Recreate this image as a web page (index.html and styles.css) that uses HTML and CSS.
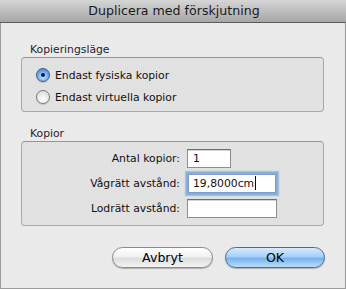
FILE: index.html
```html
<!DOCTYPE html>
<html lang="sv">
<head>
<meta charset="utf-8">
<link rel="stylesheet" href="styles.css">
</head>
<body>
<div class="window">
  <div class="titlebar">Duplicera med förskjutning</div>
  <div class="content">
    <div class="group-label first">Kopieringsläge</div>
    <div class="group radios">
      <label class="radio-row"><span class="radio checked"></span>Endast fysiska kopior</label>
      <label class="radio-row"><span class="radio"></span>Endast virtuella kopior</label>
    </div>
    <div class="group-label second">Kopior</div>
    <div class="group fields">
      <span class="field-label">Antal kopior:</span>
      <span class="input small">1</span>
      <span class="field-label">Vågrätt avstånd:</span>
      <span class="input wide focused">19,8000cm<span class="caret"></span></span>
      <span class="field-label">Lodrätt avstånd:</span>
      <span class="input wide"></span>
    </div>
    <div class="buttons">
      <button class="btn cancel">Avbryt</button>
      <button class="btn ok">OK</button>
    </div>
  </div>
</div>
</body>
</html>
```

FILE: styles.css
```css
html, body {
  margin: 0;
  padding: 0;
}
body {
  font-family: "DejaVu Sans", "Liberation Sans", sans-serif;
  font-size: 10.8px;
  color: #111;
}
.window {
  width: 346px;
  height: 289px;
  box-sizing: border-box;
  border: 1px solid #9c9c9c;
  border-top: none;
  background: repeating-linear-gradient(90deg, #ececec 0 1px, #e9e9e9 1px 2px);
  display: flex;
  flex-direction: column;
}
.titlebar {
  height: 22px;
  line-height: 22px;
  text-align: center;
  font-size: 12.6px;
  color: #1a1a1a;
  background: linear-gradient(#d6d6d6, #b9b9b9 60%, #a6a6a6);
  border-bottom: 1px solid #5c5c5c;
  margin: 0 -1px;
  padding-left: 2px;
}
.content {
  padding: 0 20px 0 20px;
  display: flex;
  flex-direction: column;
}
.group-label {
  height: 14px;
  line-height: 14px;
  padding-left: 9px;
  color: #2a2230;
}
.group-label.first { margin-top: 20px; }
.group-label.second { margin-top: 15px; }
.group {
  width: 303px;
  box-sizing: border-box;
  border: 1px solid #a9a9a9;
  border-top-color: #959595;
  border-radius: 4px;
  background: repeating-linear-gradient(90deg, #e3e3e3 0 1px, #e0e0e0 1px 2px);
}
.radios {
  height: 55px;
  padding: 6px 0 0 14px;
}
.radio-row {
  display: flex;
  align-items: center;
  height: 22px;
  gap: 5px;
}
.radio {
  width: 14px;
  height: 14px;
  border-radius: 50%;
  box-sizing: border-box;
  border: 1px solid #7a7a7a;
  background: radial-gradient(circle at 50% 70%, #ffffff, #e2e2e2 70%, #c8c8c8);
  box-shadow: 0 1px 1px rgba(0,0,0,0.15);
  position: relative;
}
.radio.checked {
  border-color: #3d5d8c;
  background: radial-gradient(circle at 50% 65%, #c9e6ff, #6fa8e8 55%, #3c76c6);
}
.radio.checked::after {
  content: "";
  position: absolute;
  left: 4px;
  top: 4px;
  width: 4px;
  height: 4px;
  border-radius: 50%;
  background: #0e1b2e;
}
.fields {
  height: 85px;
  padding: 4px 0 0 0;
  display: grid;
  grid-template-columns: 158px auto;
  grid-auto-rows: 25px;
  column-gap: 7px;
  align-items: center;
}
.field-label {
  text-align: right;
}
.input {
  display: block;
  box-sizing: border-box;
  height: 19px;
  line-height: 17px;
  padding-left: 5px;
  background: #fff;
  border: 1px solid #8e8e8e;
  border-top-color: #6d6d6d;
  box-shadow: inset 0 1px 0 #d4d4d4;
}
.input.small { width: 44px; }
.input.wide { width: 90px; }
.input.focused {
  width: 88px;
  margin-left: 1px;
  padding-left: 4px;
  border-color: #7e9cc4;
  box-shadow: 0 0 0 2px #86aee0, 0 0 1px 3px rgba(120,160,215,0.5);
}
.caret {
  display: inline-block;
  width: 1px;
  height: 14px;
  background: #000;
  vertical-align: -3px;
  margin-left: 1px;
}
.buttons {
  display: flex;
  justify-content: flex-end;
  gap: 12px;
  margin-top: 21px;
}
.btn {
  font-family: inherit;
  font-size: 12.6px;
  height: 21px;
  border-radius: 11px;
  padding: 0;
  color: #000;
  box-shadow: 0 1px 1px rgba(0,0,0,0.25);
}
.btn.cancel {
  width: 101px;
  border: 1px solid #8a8a8a;
  background: linear-gradient(#ffffff, #f2f2f2 45%, #dcdcdc 55%, #f4f4f4);
}
.btn.ok {
  width: 100px;
  border: 1px solid #4a6a9c;
  background: linear-gradient(#d6ebfd, #a7d0f6 45%, #79b3ec 55%, #b9dcfb);
}
```
